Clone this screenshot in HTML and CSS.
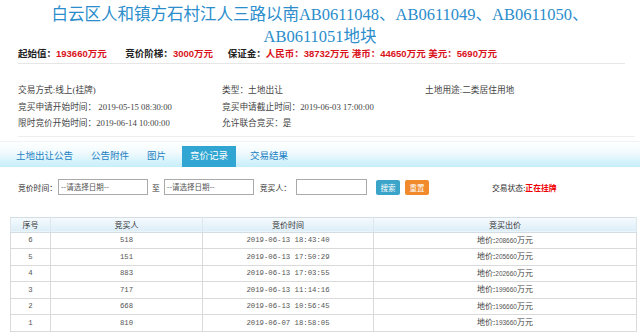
FILE: index.html
```html
<!DOCTYPE html>
<html lang="zh">
<head>
<meta charset="utf-8">
<link rel="stylesheet" href="styles.css">
</head>
<body>
<div class="page">
  <h1 class="title">白云区人和镇方石村江人三路以南AB0611048、AB0611049、AB0611050、<br>AB0611051地块</h1>
  <div class="prices">
    <span class="lbl">起始值：</span><span class="red">193660万元</span>
    <span class="lbl gap">竞价阶梯：</span><span class="red">3000万元</span>
    <span class="lbl gap2">保证金：</span><span class="red">人民币：38732万元 港币：44650万元 美元：5690万元</span>
  </div>
  <div class="info">
    <div>交易方式:线上(挂牌)</div>
    <div>类型：土地出让</div>
    <div class="use">土地用途:二类居住用地</div>
    <div>竞买申请开始时间：&nbsp;2019-05-15 08:30:00</div>
    <div>竞买申请截止时间：2019-06-03 17:00:00</div>
    <div></div>
    <div>限时竞价开始时间：2019-06-14 10:00:00</div>
    <div>允许联合竞买：是</div>
    <div></div>
  </div>
  <div class="tabs">
    <span class="tab">土地出让公告</span>
    <span class="tab">公告附件</span>
    <span class="tab">图片</span>
    <span class="tab active">竞价记录</span>
    <span class="tab">交易结果</span>
  </div>
  <div class="search">
    <span>竞价时间：</span>
    <span class="input w90">--请选择日期--</span>
    <span class="to">至</span>
    <span class="input w90">--请选择日期--</span>
    <span class="buyer">竞买人：</span>
    <span class="input w71"></span>
    <span class="btn blue">搜索</span>
    <span class="btn orange">重置</span>
    <span class="status">交易状态:<b>正在挂牌</b></span>
  </div>
  <table class="records">
    <colgroup><col class="c1"><col class="c2"><col class="c3"><col class="c4"></colgroup>
    <thead>
      <tr><th>序号</th><th>竞买人</th><th>竞价时间</th><th>竞买出价</th></tr>
    </thead>
    <tbody>
      <tr><td>6</td><td>518</td><td>2019-06-13 18:43:40</td><td><span class="cj">地价:</span><span class="num">208660</span><span class="cj">万元</span></td></tr>
      <tr><td>5</td><td>151</td><td>2019-06-13 17:50:29</td><td><span class="cj">地价:</span><span class="num">205660</span><span class="cj">万元</span></td></tr>
      <tr><td>4</td><td>883</td><td>2019-06-13 17:03:55</td><td><span class="cj">地价:</span><span class="num">202660</span><span class="cj">万元</span></td></tr>
      <tr><td>3</td><td>717</td><td>2019-06-13 11:14:16</td><td><span class="cj">地价:</span><span class="num">199660</span><span class="cj">万元</span></td></tr>
      <tr><td>2</td><td>668</td><td>2019-06-13 10:56:45</td><td><span class="cj">地价:</span><span class="num">196660</span><span class="cj">万元</span></td></tr>
      <tr><td>1</td><td>810</td><td>2019-06-07 18:58:05</td><td><span class="cj">地价:</span><span class="num">193660</span><span class="cj">万元</span></td></tr>
    </tbody>
  </table>
</div>
</body>
</html>
```
FILE: styles.css
```css
html, body {
  margin: 0;
  padding: 0;
  background: #fff;
}
.page {
  width: 640px;
  height: 334px;
  overflow: hidden;
  font-family: "Liberation Serif", "Noto Sans CJK SC", serif;
  color: #333;
}
.title {
  margin: 0;
  padding-top: 4px;
  text-align: center;
  font-family: "Liberation Serif", "Noto Sans CJK SC", serif;
  font-weight: normal;
  font-size: 16.5px;
  line-height: 22px;
  color: #2b8dcc;
}
.prices {
  margin: -2px 15px 0 18px;
  height: 17px;
  line-height: 15px;
  font-family: "Liberation Sans", "Noto Sans CJK SC", sans-serif;
  font-size: 9.5px;
  font-weight: bold;
  border-bottom: 1px solid #e6e6e6;
  white-space: nowrap;
}
.prices .lbl { color: #222; }
.prices .red { color: #d9121b; }
.prices .gap { margin-left: 16px; }
.prices .gap2 { margin-left: 12px; }
.info {
  margin: 18px 5px 0 18px;
  display: grid;
  grid-template-columns: 204px 203px 1fr;
  grid-auto-rows: 16.5px;
  font-size: 8.7px;
  line-height: 16.5px;
  color: #444;
  padding-bottom: 4px;
  border-bottom: 1px solid #eee;
}
.info .use { text-align: left; }
.tabs {
  margin-top: 4px;
  height: 25px;
  display: flex;
  align-items: flex-end;
  padding-left: 16px;
  background: linear-gradient(#ffffff 0%, #f2fbfe 40%, #c6eefb 100%);
  border-top: 1px solid #eef5f8;
}
.tab {
  font-family: "Noto Sans CJK SC", sans-serif;
  font-size: 9.5px;
  color: #1d80c2;
  height: 21px;
  line-height: 19px;
  margin-right: 18px;
}
.tab.active {
  background: #31a6d3;
  color: #fff;
  padding: 0 8px;
  margin-left: -2px;
  margin-right: 14px;
}
.search {
  display: flex;
  align-items: center;
  height: 19px;
  margin: 11px 0 0 18px;
  font-family: "Noto Sans CJK SC", sans-serif;
  font-size: 7.8px;
  color: #333;
  white-space: nowrap;
}
.input {
  box-sizing: border-box;
  height: 16px;
  line-height: 14px;
  border: 1px solid #aaa;
  padding-left: 2px;
  font-size: 7.5px;
  color: #555;
  background: #fff;
}
.w90 { width: 90px; }
.w71 { width: 71px; }
.search > span:first-child { width: 40px; }
.to { margin: 0 4px; }
.buyer { margin: 0 5px 0 6px; }
.btn {
  box-sizing: border-box;
  height: 15px;
  width: 24px;
  line-height: 15px;
  text-align: center;
  color: #fff;
  border-radius: 2px;
  font-size: 7.5px;
}
.btn.blue { background: #3aa4c9; margin-left: 9px; }
.btn.orange { background: #f08a2b; margin-left: 5px; }
.status { margin-left: 63px; }
.status b { color: #e00; }
.records {
  margin: 20px 0 0 10px;
  width: 626px;
  border-collapse: collapse;
  table-layout: fixed;
  font-size: 8px;
  color: #555;
}
.c1 { width: 40px; }
.c2 { width: 152px; }
.c3 { width: 171px; }
.c4 { width: 263px; }
.records th {
  height: 14px;
  padding: 0;
  font-family: "Noto Sans CJK SC", sans-serif;
  font-weight: normal;
  font-size: 8px;
  line-height: 14px;
  color: #333;
  background: linear-gradient(#f6fbfe, #dcedf8);
  border: 1px solid #d4dde3;
  border-left-color: #dfe6ea;
  border-right-color: #dfe6ea;
}
.records th + th { border-left: none; }
.records td {
  height: 15.5px;
  padding: 0;
  line-height: 12px;
  text-align: center;
  font-family: "Liberation Mono", "Noto Sans CJK SC", monospace;
  font-size: 7.3px;
  border: 1px solid #dadada;
}
.records td .cj {
  font-family: "Noto Sans CJK SC", sans-serif;
  font-size: 8px;
  color: #444;
}
.records td .num {
  font-family: "Liberation Sans", sans-serif;
  font-size: 6.5px;
  color: #555;
}
```
